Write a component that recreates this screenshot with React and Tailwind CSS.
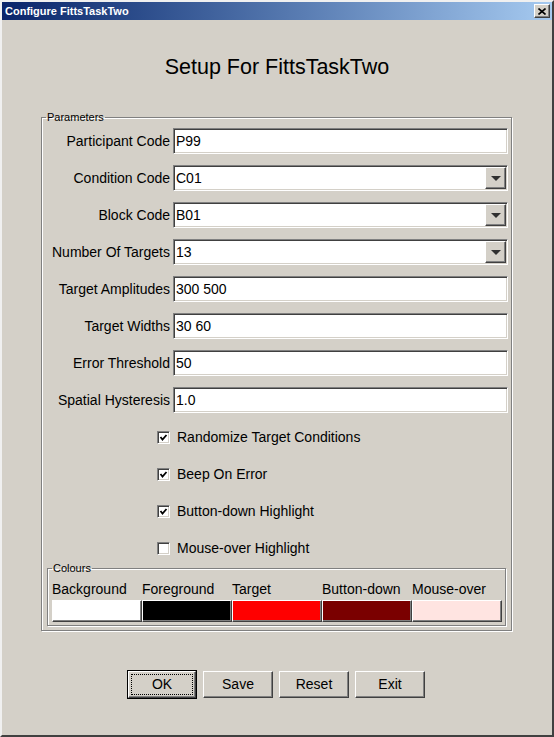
import React from 'react';

const raised =
  'bg-[#d4d0c8] border border-t-white border-l-white border-r-[#404040] border-b-[#404040] shadow-[inset_-1px_-1px_0_#808080]';
const sunken =
  'bg-white border border-t-[#808080] border-l-[#808080] border-r-white border-b-white shadow-[inset_1px_1px_0_#404040,inset_-1px_-1px_0_#d4d0c8]';
const etched =
  'border border-[#808080] shadow-[inset_1px_1px_0_#fff,1px_1px_0_#fff]';

const fields = [
  { label: 'Participant Code', value: 'P99' },
  { label: 'Condition Code', value: 'C01', combo: true },
  { label: 'Block Code', value: 'B01', combo: true },
  { label: 'Number Of Targets', value: '13', combo: true },
  { label: 'Target Amplitudes', value: '300 500' },
  { label: 'Target Widths', value: '30 60' },
  { label: 'Error Threshold', value: '50' },
  { label: 'Spatial Hysteresis', value: '1.0' },
];

const options = [
  { label: 'Randomize Target Conditions', checked: true },
  { label: 'Beep On Error', checked: true },
  { label: 'Button-down Highlight', checked: true },
  { label: 'Mouse-over Highlight', checked: false },
];

const colours = [
  { label: 'Background', color: 'bg-white' },
  { label: 'Foreground', color: 'bg-black' },
  { label: 'Target', color: 'bg-[#ff0000]' },
  { label: 'Button-down', color: 'bg-[#7a0000]' },
  { label: 'Mouse-over', color: 'bg-[#ffe4e1]' },
];

const Field = ({ label, value, combo }) => (
  <div className="flex items-center gap-[3px] h-[26px]">
    <span className="w-[123px] text-right text-[14px] leading-[16px] whitespace-nowrap">{label}</span>
    <div className={`${sunken} w-[335px] h-[26px] p-[1px] flex items-center`}>
      <span className="flex-1 pl-[1px] text-[14px] leading-[16px]">{value}</span>
      {combo && (
        <div className={`${raised} w-[21px] h-full flex items-center justify-center`}>
          <svg width="10" height="5" viewBox="0 0 10 5">
            <polygon points="0,0 10,0 5,5" fill="#303030" />
          </svg>
        </div>
      )}
    </div>
  </div>
);

const Check = ({ label, checked }) => (
  <div className="flex items-center h-[26px] pl-[110px] gap-[7px]">
    <div className={`${sunken} w-[13px] h-[13px] flex items-center justify-center`}>
      {checked && (
        <svg width="9" height="9" viewBox="0 0 9 9">
          <polyline points="1.5,4 3.5,6.5 7.5,2" fill="none" stroke="#000" strokeWidth="1.8" />
        </svg>
      )}
    </div>
    <span className="text-[14px] leading-[16px]">{label}</span>
  </div>
);

const Button = ({ children }) => (
  <div className={`${raised} w-[70px] h-[27px] flex items-center justify-center text-[14px]`}>
    {children}
  </div>
);

export default function App() {
  return (
    <div className="w-[554px] h-[737px] bg-[#d4d0c8] border-2 border-t-[#f0f0f0] border-l-[#f0f0f0] border-r-[#404040] border-b-[#404040] font-['Liberation_Sans',Arial,sans-serif] text-black overflow-hidden">
      {/* title bar */}
      <div className="h-[18px] flex items-center bg-gradient-to-r from-[#0a246a] to-[#a6caf0] pl-[3px] pr-[2px]">
        <span className="text-white font-bold text-[11px] leading-[13px] flex-1">Configure FittsTaskTwo</span>
        <div className={`${raised} w-[16px] h-[14px] flex items-center justify-center`}>
          <svg width="8" height="7" viewBox="0 0 8 7">
            <path d="M0.5 0.5 L7.5 6.5 M7.5 0.5 L0.5 6.5" stroke="#000" strokeWidth="1.6" />
          </svg>
        </div>
      </div>

      <h1 className="mt-[35px] text-center text-[21.5px] leading-[24px]">Setup For FittsTaskTwo</h1>

      <fieldset className={`${etched} ml-[39px] mt-[32px] w-[471px] pl-[5px] pr-[3px] pt-[4px] pb-[4px]`}>
        <legend className="text-[11px] leading-[13px] px-[1px] -ml-px">Parameters</legend>
        <div className="flex flex-col gap-[11px]">
          {fields.map((f) => (
            <Field key={f.label} {...f} />
          ))}
          {options.map((o) => (
            <Check key={o.label} {...o} />
          ))}
        </div>

        <fieldset className={`${etched} mt-[1px] w-[459px] pl-[4px] pt-[6px] pb-[3px]`}>
          <legend className="text-[11px] leading-[13px] px-[1px]">Colours</legend>
          <div className="flex">
            {colours.map((c) => (
              <div key={c.label} className="w-[90px] flex flex-col">
                <span className="text-[14px] leading-[16px] whitespace-nowrap">{c.label}</span>
                <div className={`${c.color} mt-[3px] h-[22px] border border-t-white border-l-white border-r-[#404040] border-b-[#404040] shadow-[inset_-1px_-1px_0_#808080]`} />
              </div>
            ))}
          </div>
        </fieldset>
      </fieldset>

      <div className="mt-[39px] ml-[125px] flex items-center gap-[6px]">
        <div className="w-[70px] h-[29px] border border-black">
          <div className={`${raised} h-full p-[2px] flex`}>
            <div className="flex-1 border border-dotted border-black flex items-center justify-center text-[14px]">OK</div>
          </div>
        </div>
        <Button>Save</Button>
        <Button>Reset</Button>
        <Button>Exit</Button>
      </div>
    </div>
  );
}
